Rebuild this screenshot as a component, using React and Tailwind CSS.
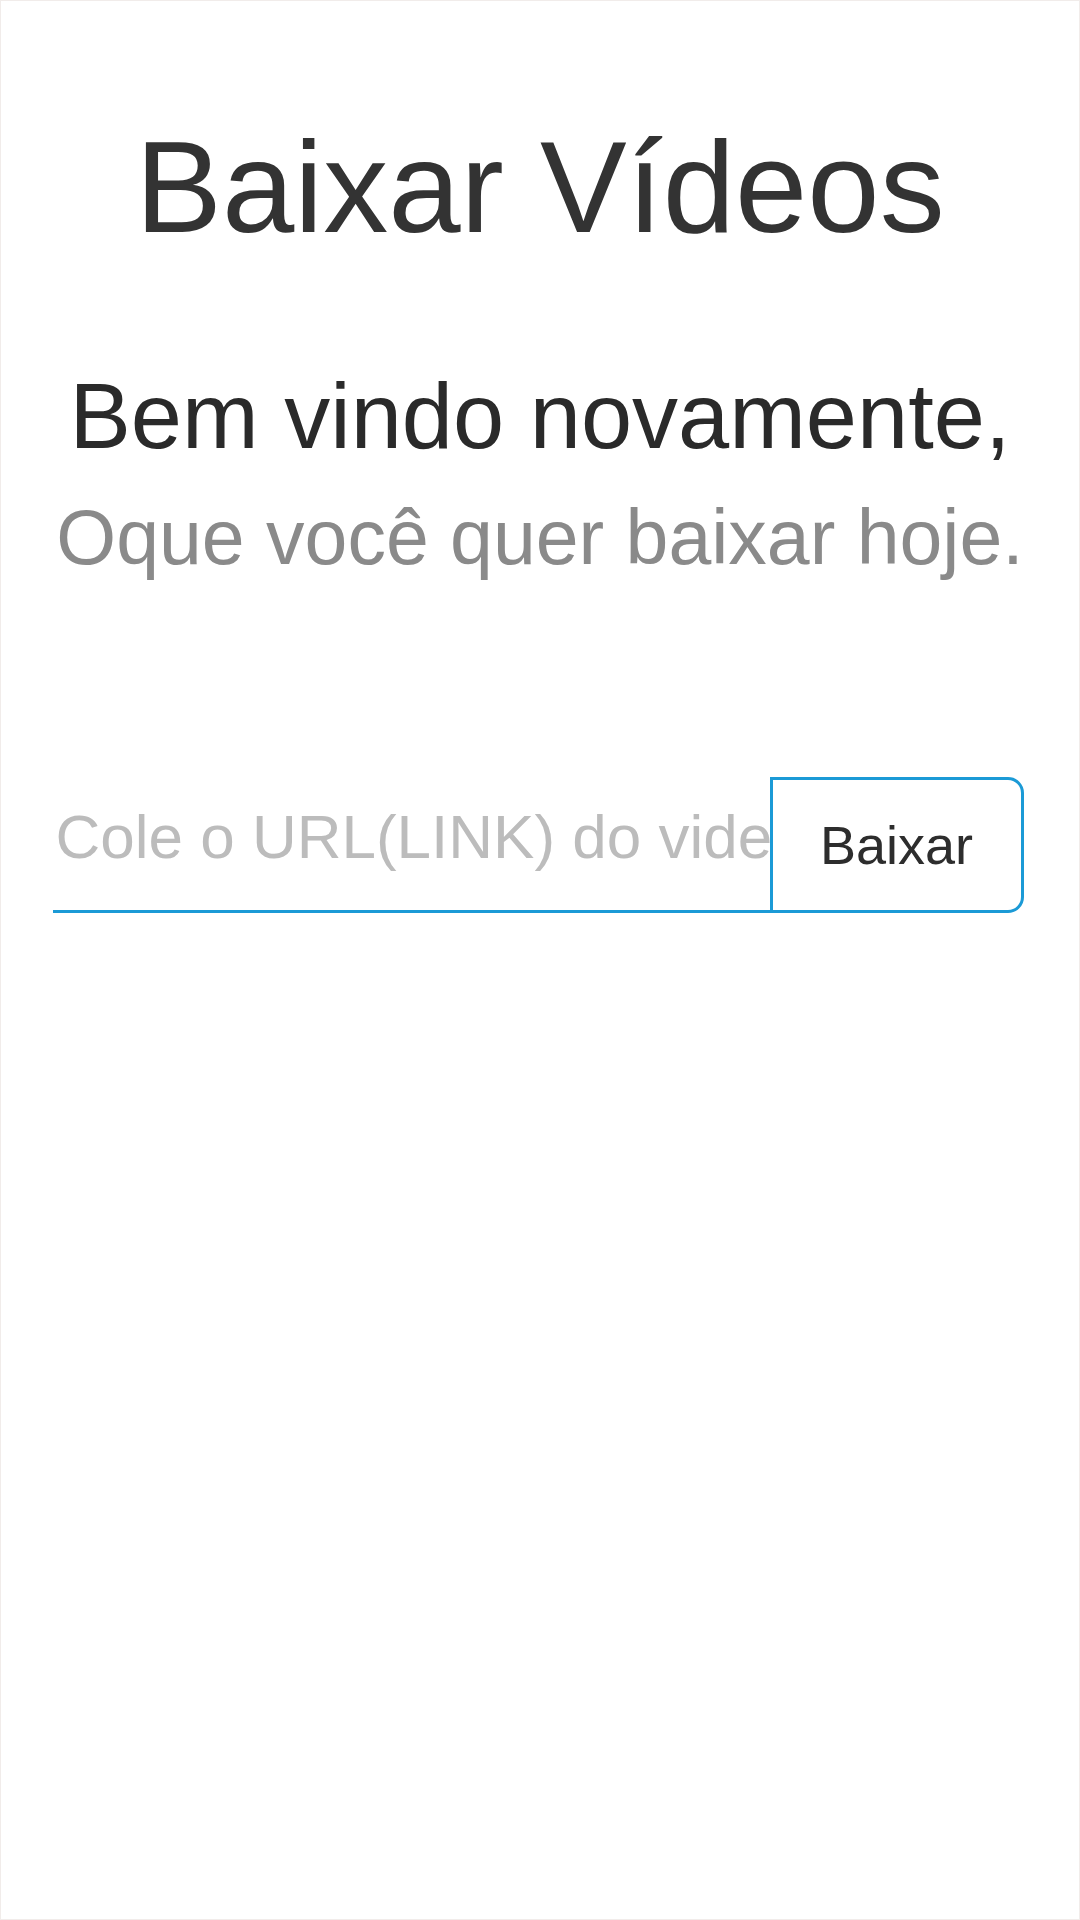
import React from "react";

export default function App() {
  return (
    <div className="w-[1080px] h-[1920px] border border-[#f1ecea] bg-white flex flex-col items-center font-['Liberation_Sans',Arial,sans-serif]">
      <h1 className="mt-[121px] text-[130px] leading-none font-normal text-[#333333]">
        Baixar Vídeos
      </h1>
      <h2 className="mt-[118px] text-[92px] leading-none font-normal text-[#2a2a2a]">
        Bem vindo novamente,
      </h2>
      <p className="mt-[37px] text-[77px] leading-none text-[#8a8a8a]">
        Oque você quer baixar hoje.
      </p>
      <div className="mt-[201px] w-[971px] ml-[-4px] flex items-end">
        <input
          type="text"
          placeholder="Cole o URL(LINK) do video aqui"
          className="flex-1 min-w-0 h-[136px] pl-[3px] pr-0 pb-[15px] bg-transparent border-0 border-b-[3px] border-[#1b9ad6] text-[62px] text-[#333333] placeholder:text-[#bcbcbc] outline-none"
        />
        <button className="w-[254px] h-[136px] shrink-0 border-[3px] border-[#1b9ad6] rounded-r-[16px] bg-white text-[54px] text-[#2d2d2d]">
          Baixar
        </button>
      </div>
    </div>
  );
}
